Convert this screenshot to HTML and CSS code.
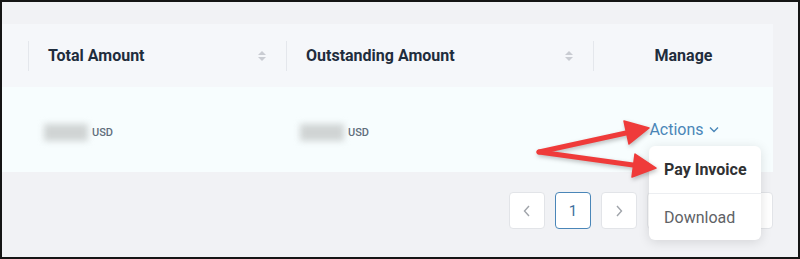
FILE: index.html
```html
<!DOCTYPE html>
<html lang="en">
<head>
    <meta charset="UTF-8">
    <meta name="viewport" content="width=device-width, initial-scale=1.0">
    <title>Invoices</title>
    <link rel="stylesheet" href="styles.css">
</head>
<body>
    <div class="frame">
        <div class="invoice-table">
            <div class="table-head">
                <div class="cell cell-lead"></div>
                <div class="cell cell-total">
                    <span>Total Amount</span>
                    <span class="sort"><i class="up"></i><i class="down"></i></span>
                </div>
                <div class="cell cell-outstanding">
                    <span>Outstanding Amount</span>
                    <span class="sort"><i class="up"></i><i class="down"></i></span>
                </div>
                <div class="cell cell-manage">Manage</div>
            </div>
            <div class="table-row">
                <div class="cell cell-lead"></div>
                <div class="cell cell-total">
                    <span class="hidden-value"></span><span class="currency">USD</span>
                </div>
                <div class="cell cell-outstanding">
                    <span class="hidden-value"></span><span class="currency">USD</span>
                </div>
                <div class="cell cell-manage">
                    <span class="actions">Actions
                        <svg width="10" height="7" viewBox="0 0 10 7"><path d="M1 1.5 L5 5.5 L9 1.5" fill="none" stroke="#4a86b8" stroke-width="1.4"/></svg>
                    </span>
                </div>
            </div>
        </div>

        <div class="pager">
            <button class="page-btn">
                <svg width="10" height="14" viewBox="0 0 10 14"><path d="M7 2 L2.5 7 L7 12" fill="none" stroke="#a0a4aa" stroke-width="1.4"/></svg>
            </button>
            <button class="page-btn active">1</button>
            <button class="page-btn">
                <svg width="10" height="14" viewBox="0 0 10 14"><path d="M3 2 L7.5 7 L3 12" fill="none" stroke="#a0a4aa" stroke-width="1.4"/></svg>
            </button>
            <div class="page-size"></div>
        </div>

        <div class="action-menu">
            <div class="menu-item strong">Pay Invoice</div>
            <div class="menu-item">Download</div>
        </div>

        <svg class="callout" width="800" height="259" viewBox="0 0 800 259">
            <g fill="#ef3b3a" stroke="#ef3b3a" stroke-linecap="round" stroke-linejoin="round">
                <path d="M539 152 L626 133" stroke-width="5" fill="none"/>
                <polygon points="649,128 629,144 624,121" stroke-width="1.5"/>
                <path d="M539 152 L633 165" stroke-width="5" fill="none"/>
                <polygon points="656,168 632,177 635,154" stroke-width="1.5"/>
            </g>
        </svg>
    </div>
</body>
</html>
```

FILE: styles.css
```css
body {
    margin: 0;
    font-family: 'Roboto', 'Liberation Sans', sans-serif;
    color: #1f2d3d;
}
.frame {
    position: relative;
    width: 800px;
    height: 259px;
    box-sizing: border-box;
    border: 2px solid #151515;
    background: #f1f2f5;
    padding-top: 22px;
    overflow: hidden;
}
.invoice-table {
    width: 771px;
}
.table-head, .table-row {
    display: flex;
    align-items: center;
}
.table-head {
    height: 63px;
    background: #f5f7fa;
    font-size: 16px;
    font-weight: 700;
    color: #1f2d3d;
}
.table-row {
    height: 85px;
    background: #f7fdfe;
}
.cell {
    display: flex;
    align-items: center;
    box-sizing: border-box;
    height: 30px;
}
.cell-lead {
    width: 26px;
}
.cell-total {
    width: 258px;
    padding: 0 20px 0 19px;
    justify-content: space-between;
}
.cell-outstanding {
    width: 307px;
    padding: 0 20px 0 19px;
    justify-content: space-between;
}
.cell-manage {
    width: 180px;
    justify-content: center;
}
.table-head .cell-total, .table-head .cell-outstanding, .table-head .cell-manage {
    border-left: 1px solid #e4e7ec;
}
.table-row .cell-total, .table-row .cell-outstanding {
    justify-content: flex-start;
    padding-top: 6px;
}
.table-row .cell-total {
    padding-left: 16px;
}
.table-row .cell-outstanding {
    padding-left: 14px;
}
.sort {
    display: flex;
    flex-direction: column;
    gap: 2px;
}
.sort i {
    width: 0;
    height: 0;
    border-left: 4px solid transparent;
    border-right: 4px solid transparent;
}
.sort .up {
    border-bottom: 4px solid #c9ccd2;
}
.sort .down {
    border-top: 4px solid #c9ccd2;
}
.hidden-value {
    display: inline-block;
    width: 44px;
    height: 17px;
    background: #d0d4d4;
    filter: blur(3px);
    margin-right: 4px;
}
.currency {
    font-size: 11px;
    font-weight: 500;
    color: #5f6e7c;
}
.actions {
    display: flex;
    align-items: center;
    gap: 5px;
    font-size: 16px;
    color: #4a86b8;
    margin-left: 2px;
}
.pager {
    display: flex;
    gap: 10px;
    width: 771px;
    justify-content: flex-end;
    margin-top: 20px;
}
.page-btn {
    width: 36px;
    height: 37px;
    display: flex;
    align-items: center;
    justify-content: center;
    background: #fff;
    border: 1px solid #e2e4e8;
    border-radius: 4px;
    font-family: inherit;
    font-size: 15px;
    color: #3d6f9e;
    padding: 0;
}
.page-btn.active {
    border: 1.5px solid #4a86b8;
}
.page-size {
    width: 126px;
    height: 37px;
    background: #fff;
    border: 1px solid #e2e4e8;
    border-radius: 4px;
    box-sizing: border-box;
}
.action-menu {
    position: absolute;
    left: 647px;
    top: 144px;
    width: 112px;
    background: #fff;
    border-radius: 6px;
    box-shadow: 0 2px 12px rgba(0, 0, 0, 0.12);
}
.menu-item {
    height: 46px;
    display: flex;
    align-items: center;
    padding-left: 15px;
    font-size: 16px;
    color: #606266;
}
.menu-item.strong {
    height: 47px;
    font-weight: 700;
    color: #303133;
    border-bottom: 1px solid #eceef1;
}
.callout {
    position: absolute;
    left: -2px;
    top: -2px;
    filter: drop-shadow(1px 2px 2px rgba(0, 0, 0, 0.25));
}
```
